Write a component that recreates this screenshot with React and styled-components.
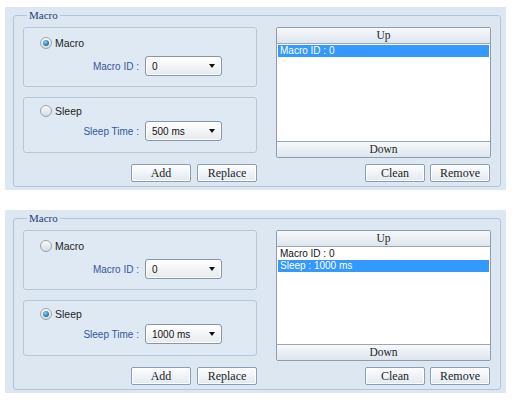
import React from 'react'
import styled, { createGlobalStyle } from 'styled-components'

const GlobalStyle = createGlobalStyle`
  body {
    margin: 0;
    background: #ffffff;
    font-family: "Liberation Sans", Arial, sans-serif;
  }
`

const Page = styled.div`
  display: flex;
  flex-direction: column;
  gap: 20px;
  padding: 7px 0 0 5px;
`

const Panel = styled.div`
  width: 501px;
  box-sizing: border-box;
  padding: 2px 5px 3px 8px;
  background: #dce7f2;
`

const Frame = styled.fieldset`
  margin: 0;
  min-width: 0;
  padding: 6px 10px 4px 9px;
  border: 1px solid #b3c5d8;
  border-radius: 3px;
`

const Legend = styled.legend`
  padding: 0 2px;
  margin-left: 4px;
  font-family: "Liberation Serif", "Times New Roman", serif;
  font-size: 11px;
  line-height: 12px;
  color: #24407a;
`

const Layout = styled.div`
  display: grid;
  grid-template-columns: 234px 214px;
  grid-template-rows: 131px 18px;
  column-gap: 19px;
  row-gap: 6px;
`

const Options = styled.div`
  display: flex;
  flex-direction: column;
  gap: 10px;
`

const OptionBox = styled.div`
  height: ${p => p.$h}px;
  box-sizing: border-box;
  padding: ${p => p.$pad};
  border: 1px solid #b6c7d9;
  border-radius: 3px;
  background: #dfe9f4;
`

const RadioRow = styled.label`
  display: flex;
  align-items: center;
  gap: 3px;
  height: 14px;
  font-size: 10.5px;
  color: #1e1e1e;
`

const Radio = styled.span`
  position: relative;
  width: 12px;
  height: 12px;
  box-sizing: border-box;
  border-radius: 50%;
  border: 1px solid #98a3ae;
  background: linear-gradient(#fbfbfb, #d5dbe1);

  &::after {
    content: '';
    display: ${p => (p.$on ? 'block' : 'none')};
    position: absolute;
    left: 2px;
    top: 2px;
    width: 6px;
    height: 6px;
    border-radius: 50%;
    background: radial-gradient(circle at 40% 35%, #8fd3f0, #2b86bd 55%, #164e78);
  }
`

const FieldRow = styled.div`
  display: flex;
  justify-content: flex-end;
  align-items: center;
  gap: 6px;
  margin-top: ${p => p.$gap}px;
  padding-right: 34px;
`

const FieldLabel = styled.span`
  font-size: 10px;
  color: #34569b;
`

const Dropdown = styled.div`
  display: flex;
  align-items: center;
  justify-content: space-between;
  width: 77px;
  height: 20px;
  box-sizing: border-box;
  padding: 0 6px 0 6px;
  border: 1px solid #8795a4;
  border-radius: 3px;
  background: linear-gradient(#ffffff, #e6eaee);
  box-shadow: inset 0 0 0 1px #ffffff;
  font-size: 10px;
  color: #111;
`

const Caret = styled.span`
  width: 0;
  height: 0;
  border-left: 3.5px solid transparent;
  border-right: 3.5px solid transparent;
  border-top: 4px solid #111;
`

const ButtonRow = styled.div`
  display: flex;
  justify-content: flex-end;
  gap: ${p => p.$gap}px;
`

const Button = styled.button`
  width: 60px;
  height: 18px;
  padding: 0;
  border: 1px solid #8b9db3;
  border-radius: 2px;
  background: linear-gradient(#fdfeff, #e2e9f1);
  box-shadow: inset 0 0 0 1px #ffffff;
  font-family: "Liberation Serif", "Times New Roman", serif;
  font-size: 12px;
  color: #1e1e1e;
`

const ListBox = styled.div`
  display: flex;
  flex-direction: column;
  width: 213px;
  border: 1px solid #8e9cab;
  border-radius: 2px;
  background: #ffffff;
  overflow: hidden;
`

const ListBar = styled.div`
  height: 15px;
  flex: none;
  line-height: 15px;
  text-align: center;
  font-family: "Liberation Serif", "Times New Roman", serif;
  font-size: 11.5px;
  color: #1e1e1e;
  background: linear-gradient(#f7f9fc, #dde5ee);
  border-top: ${p => (p.$bottom ? '1px solid #9aa7b5' : 'none')};
  border-bottom: ${p => (p.$bottom ? 'none' : '1px solid #9aa7b5')};
`

const ListBody = styled.div`
  flex: 1;
  padding-top: 1px;
`

const ListItem = styled.div`
  height: 12px;
  margin: 0 1px;
  padding-left: 2px;
  line-height: 12px;
  font-size: 10px;
  color: ${p => (p.$sel ? '#ffffff' : '#111')};
  background: ${p => (p.$sel ? '#3399ff' : 'transparent')};
`

function MacroPanel({ mode, sleep, items, selected }) {
  return (
    <Panel>
      <Frame>
        <Legend>Macro</Legend>
        <Layout>
          <Options>
            <OptionBox $h={60} $pad="8px 0 0 16px">
              <RadioRow>
                <Radio $on={mode === 'macro'} />
                Macro
              </RadioRow>
              <FieldRow $gap={6}>
                <FieldLabel>Macro ID :</FieldLabel>
                <Dropdown>
                  0
                  <Caret />
                </Dropdown>
              </FieldRow>
            </OptionBox>
            <OptionBox $h={56} $pad="6px 0 0 16px">
              <RadioRow>
                <Radio $on={mode === 'sleep'} />
                Sleep
              </RadioRow>
              <FieldRow $gap={3}>
                <FieldLabel>Sleep Time :</FieldLabel>
                <Dropdown>
                  {sleep}
                  <Caret />
                </Dropdown>
              </FieldRow>
            </OptionBox>
          </Options>
          <ListBox>
            <ListBar>Up</ListBar>
            <ListBody>
              {items.map((text, i) => (
                <ListItem key={text} $sel={i === selected}>
                  {text}
                </ListItem>
              ))}
            </ListBody>
            <ListBar $bottom>Down</ListBar>
          </ListBox>
          <ButtonRow $gap={6}>
            <Button>Add</Button>
            <Button>Replace</Button>
          </ButtonRow>
          <ButtonRow $gap={5}>
            <Button>Clean</Button>
            <Button>Remove</Button>
          </ButtonRow>
        </Layout>
      </Frame>
    </Panel>
  )
}

export default function App() {
  return (
    <>
      <GlobalStyle />
      <Page>
        <MacroPanel mode="macro" sleep="500 ms" items={['Macro ID : 0']} selected={0} />
        <MacroPanel
          mode="sleep"
          sleep="1000 ms"
          items={['Macro ID : 0', 'Sleep : 1000 ms']}
          selected={1}
        />
      </Page>
    </>
  )
}
